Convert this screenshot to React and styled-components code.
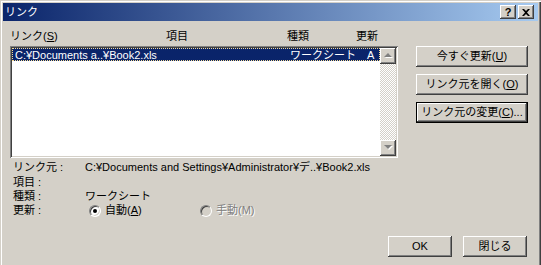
import React from 'react';
import styled, { createGlobalStyle, css } from 'styled-components';

const Global = createGlobalStyle`
  html, body { margin: 0; padding: 0; background: #d4d0c8; overflow: hidden; }
  body {
    font-family: "Liberation Sans", "Noto Sans CJK JP", sans-serif;
    font-size: 11px;
    line-height: 13px;
    color: #000;
  }
  u { text-decoration: underline; text-underline-offset: 1px; }
`;

const raised = css`
  background: #d4d0c8;
  box-shadow: inset -1px -1px 0 #404040, inset 1px 1px 0 #ffffff,
    inset -2px -2px 0 #808080, inset 2px 2px 0 #d4d0c8;
`;

const Window = styled.div`
  width: 541px;
  height: 268px;
  box-sizing: border-box;
  padding: 3px;
  background: #d4d0c8;
  box-shadow: inset 1px 1px 0 #d4d0c8, inset 2px 2px 0 #ffffff,
    inset -1px -1px 0 #404040, inset -2px -2px 0 #808080;
  display: flex;
  flex-direction: column;
`;

const TitleBar = styled.div`
  height: 18px;
  flex: none;
  display: flex;
  align-items: center;
  padding: 0 4px 0 2px;
  background: linear-gradient(to right, #0a246a, #a6caf0);
  color: #fff;
`;

const TitleText = styled.div`
  flex: 1;
  font-size: 11px;
`;

const CaptionButton = styled.div`
  ${raised};
  width: 16px;
  height: 14px;
  display: flex;
  align-items: center;
  justify-content: center;
  color: #000;
  font-weight: bold;
  font-size: 11px;
  margin-left: ${(p) => p.$gap || 0}px;
`;

const Content = styled.div`
  flex: 1;
  display: flex;
  flex-direction: column;
  padding: 5px 10px 0 7px;
`;

const MainRow = styled.div`
  display: flex;
  gap: 18px;
`;

const LeftCol = styled.div`
  width: 388px;
  display: flex;
  flex-direction: column;
`;

const HeaderRow = styled.div`
  height: 20px;
  display: grid;
  grid-template-columns: 156px 121px 69px auto;
  align-items: center;
`;

const ListBox = styled.div`
  height: 112px;
  box-sizing: border-box;
  background: #fff;
  box-shadow: inset 1px 1px 0 #808080, inset -1px -1px 0 #ffffff,
    inset 2px 2px 0 #404040, inset -2px -2px 0 #d4d0c8;
  padding: 2px;
  display: flex;
`;

const ListArea = styled.div`
  flex: 1;
`;

const ListRow = styled.div`
  height: 13px;
  box-sizing: border-box;
  display: grid;
  grid-template-columns: 275px 77px 1fr;
  align-items: center;
  padding-left: 2px;
  background: ${(p) => (p.$selected ? '#0a246a' : 'transparent')};
  color: ${(p) => (p.$selected ? '#fff' : '#000')};
  border: 1px dotted ${(p) => (p.$selected ? '#f5db95' : 'transparent')};
  white-space: nowrap;
  overflow: hidden;
`;

const Cell = styled.span``;

const ScrollBar = styled.div`
  width: 16px;
  display: flex;
  flex-direction: column;
  justify-content: space-between;
  background: repeating-conic-gradient(#d4d0c8 0 25%, #ffffff 0 50%) 0 0 / 2px 2px;
`;

const ArrowButton = styled.div`
  ${raised};
  width: 16px;
  height: 16px;
  display: flex;
  align-items: center;
  justify-content: center;
`;

const RightCol = styled.div`
  width: 112px;
  padding-top: 20px;
  display: flex;
  flex-direction: column;
  gap: 7px;
`;

const Button = styled.div`
  ${raised};
  width: ${(p) => p.$w || 112}px;
  height: 21px;
  box-sizing: border-box;
  display: flex;
  align-items: center;
  justify-content: center;
  white-space: nowrap;
  ${(p) =>
    p.$default &&
    css`
      box-shadow: inset 0 0 0 1px #000, inset -2px -2px 0 #404040,
        inset 2px 2px 0 #ffffff, inset -3px -3px 0 #808080;
    `}
`;

const InfoGrid = styled.div`
  margin-top: 2px;
  padding-left: 3px;
  display: grid;
  grid-template-columns: 72px 1fr;
  grid-template-rows: 15px 15px 13px 15px;
  align-items: center;
  white-space: nowrap;
`;

const RadioRow = styled.div`
  display: flex;
  align-items: center;
  padding-left: 4px;
`;

const RadioItem = styled.label`
  display: flex;
  align-items: center;
  gap: 4px;
  width: ${(p) => p.$w || 'auto'};
  color: ${(p) => (p.$disabled ? '#808080' : '#000')};
  text-shadow: ${(p) => (p.$disabled ? '1px 1px 0 #fff' : 'none')};
`;

const RadioCircle = styled.span`
  position: relative;
  width: 12px;
  height: 12px;
  box-sizing: border-box;
  border-radius: 50%;
  border: 1px solid;
  border-color: #808080 #ffffff #ffffff #808080;
  background: ${(p) => (p.$disabled ? '#d4d0c8' : '#ffffff')};
  box-shadow: inset 1px 1px 0 #404040, inset -1px -1px 0 #d4d0c8;
  &::after {
    content: '';
    display: ${(p) => (p.$checked ? 'block' : 'none')};
    position: absolute;
    left: 3px;
    top: 3px;
    width: 4px;
    height: 4px;
    border-radius: 50%;
    background: #000;
  }
`;

const BottomRow = styled.div`
  margin-top: 18px;
  display: flex;
  justify-content: flex-end;
  gap: 11px;
  padding-right: 1px;
`;

const Arrow = ({ up }) => (
  <svg width="9" height="6" viewBox="0 0 9 6">
    <polygon points={up ? '5,1 9,5 1,5' : '1,1 9,1 5,5'} fill="#ffffff" />
    <polygon points={up ? '4,0 8,4 0,4' : '0,0 8,0 4,4'} fill="#808080" />
  </svg>
);

export default function App() {
  return (
    <>
      <Global />
      <Window>
        <TitleBar>
          <TitleText>リンク</TitleText>
          <CaptionButton>?</CaptionButton>
          <CaptionButton $gap={2}>
            <svg width="8" height="7" viewBox="0 0 8 7">
              <path d="M0 0h2l2 2 2-2h2L5 3.5 8 7H6L4 5 2 7H0l3-3.5z" fill="#000" />
            </svg>
          </CaptionButton>
        </TitleBar>
        <Content>
          <MainRow>
            <LeftCol>
              <HeaderRow>
                <span>
                  リンク(<u>S</u>)
                </span>
                <span>項目</span>
                <span>種類</span>
                <span>更新</span>
              </HeaderRow>
              <ListBox>
                <ListArea>
                  <ListRow $selected>
                    <Cell>C:¥Documents a..¥Book2.xls</Cell>
                    <Cell>ワークシート</Cell>
                    <Cell>A</Cell>
                  </ListRow>
                </ListArea>
                <ScrollBar>
                  <ArrowButton>
                    <Arrow up />
                  </ArrowButton>
                  <ArrowButton>
                    <Arrow />
                  </ArrowButton>
                </ScrollBar>
              </ListBox>
            </LeftCol>
            <RightCol>
              <Button>
                今すぐ更新(<u>U</u>)
              </Button>
              <Button>
                リンク元を開く(<u>O</u>)
              </Button>
              <Button $default>
                リンク元の変更(<u>C</u>)...
              </Button>
            </RightCol>
          </MainRow>
          <InfoGrid>
            <span>リンク元 :</span>
            <span>C:¥Documents and Settings¥Administrator¥デ..¥Book2.xls</span>
            <span>項目 :</span>
            <span />
            <span>種類 :</span>
            <span>ワークシート</span>
            <span>更新 :</span>
            <RadioRow>
              <RadioItem $w="111px">
                <RadioCircle $checked />
                <span>
                  自動(<u>A</u>)
                </span>
              </RadioItem>
              <RadioItem $disabled>
                <RadioCircle $disabled />
                <span>手動(M)</span>
              </RadioItem>
            </RadioRow>
          </InfoGrid>
          <BottomRow>
            <Button $w={64}>OK</Button>
            <Button $w={64}>閉じる</Button>
          </BottomRow>
        </Content>
      </Window>
    </>
  );
}
